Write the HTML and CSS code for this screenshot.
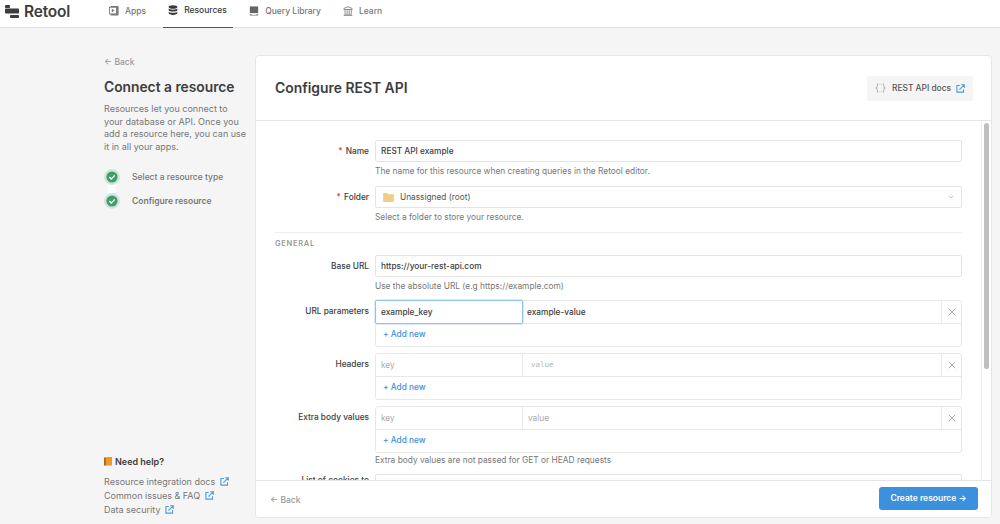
FILE: index.html
```html
<!DOCTYPE html>
<html lang="en">
<head>
<meta charset="utf-8">
<title>Retool - Configure REST API</title>
<link rel="stylesheet" href="styles.css">
</head>
<body>
<svg class="defs" width="0" height="0" aria-hidden="true">
  <symbol id="ext" viewBox="0 0 10 10">
    <path d="M4.2 1.6H1v7.4h7.4V5.8" fill="none" stroke="currentColor" stroke-width="1.2"/>
    <path d="M3.8 6.2L8.8 1.2M5.8 .8h3.4v3.4" fill="none" stroke="currentColor" stroke-width="1.2"/>
  </symbol>
  <symbol id="check" viewBox="0 0 16 16">
    <circle cx="8" cy="8" r="7.9" fill="#cfe6d9"/>
    <circle cx="8" cy="8" r="5.6" fill="#3f9f6c"/>
    <path d="M5.3 8.1l1.9 1.9 3.5-3.6" fill="none" stroke="#fff" stroke-width="1.4"/>
  </symbol>
  <symbol id="close" viewBox="0 0 8 8">
    <path d="M.8 .8l6.4 6.4M7.2 .8L.8 7.2" fill="none" stroke="currentColor" stroke-width="1"/>
  </symbol>
</svg>
<header class="topbar">
  <div class="logo">
    <svg class="logo-mark" viewBox="0 0 14 13" aria-hidden="true">
      <rect x="0" y="0" width="5" height="3" rx=".8" fill="#3d3d3d"/>
      <rect x="0" y="3.6" width="14" height="5" rx=".8" fill="#3d3d3d"/>
      <rect x="5" y="10" width="9" height="3" rx=".8" fill="#3d3d3d"/>
    </svg>
    <span class="logo-text">Retool</span>
  </div>
  <nav class="nav">
    <a class="nav-item nav-first">
      <svg class="nav-icon" viewBox="0 0 12 12" aria-hidden="true"><path d="M2 0h8.500a1 1 0 0 1 1 1v9.500a1 1 0 0 1-1 1H2z" fill="#777"/><rect x=".5" y="1.500" width="8.500" height="8" fill="#fff" stroke="#777"/><path d="M3.300 3.300l3.400 2.200-3.400 2.200z" fill="#777"/></svg>
      Apps
    </a>
    <a class="nav-item nav-active">
      <svg class="nav-icon" viewBox="0 0 12 12" aria-hidden="true"><ellipse cx="6" cy="2.400" rx="5.200" ry="2.200" fill="#3a3a3a"/><path d="M.8 4.200c1 1.800 9.400 1.800 10.400 0v2.300c-1 1.800-9.400 1.800-10.400 0z" fill="#3a3a3a"/><path d="M.8 8c1 1.800 9.400 1.800 10.400 0v1.600c0 1.300-2.300 2.300-5.200 2.300S.8 10.900.8 9.600z" fill="#3a3a3a"/></svg>
      Resources
    </a>
    <a class="nav-item nav-gap">
      <svg class="nav-icon" viewBox="0 0 12 12" aria-hidden="true"><path d="M1 .5h10v8H1z" fill="#666"/><path d="M1 9.500h10V11.500H1z" fill="#888"/><rect x="3" y="9.800" width="6" height="1" fill="#fff"/></svg>
      Query Library
    </a>
    <a class="nav-item nav-gap">
      <svg class="nav-icon" viewBox="0 0 12 12" aria-hidden="true"><path d="M6 .8L1 3v1.200h10V3zM2.500 5v4M5 5v4M7.500 5v4M10 5v4M1.500 9.800h9M.8 11.300h10.400" fill="none" stroke="#777"/></svg>
      Learn
    </a>
  </nav>
</header>

<main class="page">
  <aside class="side">
    <a class="side-back"><span class="arrow">←</span> Back</a>
    <h1 class="side-title">Connect a resource</h1>
    <p class="side-text">Resources let you connect to your database or API. Once you add a resource here, you can use it in all your apps.</p>
    <ol class="steps">
      <li class="step"><svg class="step-icon"><use href="#check"/></svg>Select a resource type</li>
      <li class="step-link"></li>
      <li class="step step-current"><svg class="step-icon"><use href="#check"/></svg>Configure resource</li>
    </ol>
    <div class="help">
      <div class="help-title">
        <svg class="book" viewBox="0 0 8 9" aria-hidden="true"><rect x="0" y=".5" width="2.500" height="8" fill="#a8681f"/><rect x="1.800" y="0" width="6.200" height="8.500" fill="#ec9a2a"/></svg>
        Need help?
      </div>
      <a class="help-link">Resource integration docs <svg class="ext"><use href="#ext"/></svg></a>
      <a class="help-link">Common issues &amp; FAQ <svg class="ext"><use href="#ext"/></svg></a>
      <a class="help-link">Data security <svg class="ext"><use href="#ext"/></svg></a>
    </div>
  </aside>

  <section class="card">
    <div class="card-head">
      <h2 class="card-title">Configure REST API</h2>
      <a class="docs-btn">
        <svg class="braces" viewBox="0 0 12 10" aria-hidden="true"><path d="M3.500 .5H2.500v3.500L.7 5l1.800 1v3.500h1M8.500 .5h1v3.500L11.300 5 9.500 6v3.500h-1M5 1h.8M6.800 1h.8M5 9h.8M6.800 9h.8" fill="none" stroke="#aaa" stroke-width=".9"/></svg>
        REST API docs
        <svg class="ext"><use href="#ext"/></svg>
      </a>
    </div>
    <div class="card-mid">
      <div class="scroll">
        <div class="row">
          <label class="label"><span class="req">*</span> Name</label>
          <div class="field"><div class="input">REST API example</div><p class="hint">The name for this resource when creating queries in the Retool editor.</p></div>
        </div>
        <div class="row">
          <label class="label"><span class="req">*</span> Folder</label>
          <div class="field">
            <div class="input input-select">
              <svg class="folder" viewBox="0 0 12 10" aria-hidden="true"><path d="M0 1a1 1 0 0 1 1-1h3.500l1 1.400H11a1 1 0 0 1 1 1V9a1 1 0 0 1-1 1H1a1 1 0 0 1-1-1z" fill="#f0cd87"/></svg>
              <span class="select-text">Unassigned (root)</span>
              <svg class="chev" viewBox="0 0 8 5" aria-hidden="true"><path d="M1 1l3 3 3-3" fill="none" stroke="#aaa"/></svg>
            </div>
            <p class="hint">Select a folder to store your resource.</p>
          </div>
        </div>
        <hr class="divider">
        <div class="section">GENERAL</div>
        <div class="row row-base">
          <label class="label">Base URL</label>
          <div class="field"><div class="input">https://your-rest-api.com</div><p class="hint">Use the absolute URL (e.g https://example.com)</p></div>
        </div>
        <div class="row row-kv">
          <label class="label label-low">URL parameters</label>
          <div class="field">
            <div class="kv">
              <div class="kv-line">
                <div class="kv-key kv-focus">example_key</div>
                <div class="kv-val">example-value</div>
                <div class="kv-x"><svg class="x"><use href="#close"/></svg></div>
              </div>
              <div class="kv-add">+ Add new</div>
            </div>
          </div>
        </div>
        <div class="row row-kv">
          <label class="label">Headers</label>
          <div class="field">
            <div class="kv">
              <div class="kv-line">
                <div class="kv-key ph">key</div>
                <div class="kv-val ph mono">value</div>
                <div class="kv-x"><svg class="x"><use href="#close"/></svg></div>
              </div>
              <div class="kv-add">+ Add new</div>
            </div>
          </div>
        </div>
        <div class="row row-kv row-extra">
          <label class="label">Extra body values</label>
          <div class="field">
            <div class="kv">
              <div class="kv-line">
                <div class="kv-key ph">key</div>
                <div class="kv-val ph">value</div>
                <div class="kv-x"><svg class="x"><use href="#close"/></svg></div>
              </div>
              <div class="kv-add">+ Add new</div>
            </div>
            <p class="hint">Extra body values are not passed for GET or HEAD requests</p>
          </div>
        </div>
        <div class="row">
          <label class="label label-top">List of cookies to</label>
          <div class="field"><div class="input"></div></div>
        </div>
      </div>
      <div class="scrollbar"><div class="thumb"></div></div>
    </div>
    <div class="card-foot">
      <a class="foot-back"><span class="arrow">←</span> Back</a>
      <a class="create">Create resource →</a>
    </div>
  </section>
</main>
</body>
</html>
```

FILE: styles.css
```css
* { box-sizing: border-box; }
html, body { margin: 0; height: 524px; overflow: hidden; }
body {
  font-family: Inter, "Liberation Sans", sans-serif;
  font-size: 9px;
  color: #3d3d3d;
  background: #f5f5f5;
  display: flex;
  flex-direction: column;
}
.defs { position: absolute; }
p, h1, h2, ol { margin: 0; padding: 0; }

.topbar {
  height: 28px;
  flex: none;
  background: #fff;
  border-bottom: 1px solid #e2e2e2;
  display: flex;
}
.logo { width: 100px; display: flex; align-items: center; padding: 0 0 5px 5px; gap: 5px; }
.logo-mark { width: 14px; height: 13px; }
.logo-text { font-size: 15.500px; font-weight: 600; color: #3d3d3d; letter-spacing: -.2px; }
.nav { display: flex; padding-left: 3px; }
.nav-item {
  display: flex; align-items: center; gap: 6px;
  height: 27px; padding: 0 6px 6px 6px;
  font-size: 8.500px; font-weight: 500; color: #777;
  margin-right: 6px;
}
.nav-first { margin-right: 11px; }
.nav-active { color: #3a3a3a; border-bottom: 1px solid #555; height: 28px; padding: 0 5px 7px; width: 70px; margin-right: 10px; }
.nav-gap { margin-right: 10px; }
.nav-icon { width: 10px; height: 10px; flex: none; }

.page { flex: 1; display: flex; min-height: 0; padding: 27px 8px 6px 104px; }

.side { width: 151px; flex: none; display: flex; flex-direction: column; padding-top: 1px; }
.side-back { font-size: 8.500px; color: #999; font-weight: 500; height: 13px; line-height: 13px; }
.arrow { color: #999; }
.side-title { font-size: 13.800px; font-weight: 600; color: #3d3d3d; line-height: 20px; margin-top: 8px; white-space: nowrap; }
.side-text { font-size: 9px; line-height: 12.500px; color: #777; margin-top: 6px; width: 144px; }
.steps { list-style: none; margin-top: 16px; }
.step { display: flex; align-items: center; gap: 12px; height: 16px; font-size: 8.500px; font-weight: 500; color: #777; }
.step-current { font-weight: 600; }
.step-icon { width: 16px; height: 16px; flex: none; }
.step-link { width: 8px; height: 7.500px; margin-left: 4px; background: #fff; }
.help { margin-top: auto; padding-bottom: 2px; }
.help-title { font-size: 9px; font-weight: 600; color: #3d3d3d; display: flex; align-items: center; gap: 3px; height: 14px; margin-bottom: 6px; }
.book { width: 8px; height: 9px; }
.help-link { display: flex; align-items: center; gap: 5px; font-size: 9px; color: #777; height: 14px; white-space: nowrap; }
.ext { width: 9px; height: 9px; color: #4a9be0; flex: none; }

.card {
  flex: 1; min-width: 0;
  background: #fff;
  border: 1px solid #e6e6e6;
  border-radius: 4px;
  display: flex; flex-direction: column;
  overflow: hidden;
}
.card-head {
  height: 65px; flex: none;
  display: flex; align-items: center; justify-content: space-between;
  padding: 0 18px 0 19px;
  border-bottom: 1px solid #e6e6e6;
}
.card-title { font-size: 13.900px; font-weight: 600; color: #3d3d3d; }
.docs-btn {
  display: flex; align-items: center; gap: 5px;
  height: 25px; padding: 0 8px;
  background: #f5f5f5; border-radius: 3px;
  font-size: 8.400px; font-weight: 500; color: #555;
}
.braces { width: 11px; height: 10px; margin-right: 1px; }

.card-mid { flex: 1; min-height: 0; display: flex; }
.scroll { flex: 1; min-width: 0; overflow: hidden; padding: 19px 19px 0 19px; }
.scrollbar { width: 10px; flex: none; border-left: 1px solid #eee; background: #fff; padding: 2px 2px 0 2px; }
.thumb { width: 5px; height: 246px; border-radius: 3px; background: #bfbfbf; }

.row { display: grid; grid-template-columns: 94px 1fr; column-gap: 6px; margin-bottom: 8px; }
.row-base { margin-bottom: 7px; }
.label { font-size: 8.300px; font-weight: 500; color: #3d3d3d; text-align: right; line-height: 22px; white-space: nowrap; }
.label-top { line-height: 12px; }
.label-low { line-height: 23px; }
.req { color: #e2403d; margin-right: 1px; }
.field { min-width: 0; }
.input {
  height: 22px; line-height: 20px;
  border: 1px solid #e4e4e4; border-radius: 2px;
  padding: 0 5px; font-size: 8.300px; font-weight: 500; color: #3d3d3d;
  background: #fff;
}
.input-select { display: flex; align-items: center; gap: 6px; }
.folder { width: 11px; height: 9px; margin-left: 2px; flex: none; }
.select-text { flex: 1; color: #555; font-weight: 400; }
.chev { width: 6px; height: 4px; margin-right: 2px; }
.hint { font-size: 8.350px; color: #777; line-height: 14px; margin-top: 2px; white-space: nowrap; }
.divider { border: 0; border-top: 1px solid #eee; margin: 8px 0 0; }
.section { font-size: 7.500px; font-weight: 600; letter-spacing: .7px; color: #999; line-height: 10px; margin: 6px 0 6px; }

.row-kv { margin-bottom: 6px; }
.row-extra { margin-bottom: 7px; }
.kv { border: 1px solid #e8e8e8; border-radius: 3px; background: #fff; }
.kv-line { display: flex; height: 23px; border-bottom: 1px solid #e8e8e8; }
.kv-key {
  width: 146px; flex: none; padding: 0 5px; line-height: 22px;
  font-size: 8.300px; font-weight: 500; color: #3d3d3d;
}
.kv-focus { border: 1px solid #8cc4f2; box-shadow: 0 0 0 1px #dcecfb; border-radius: 2px; line-height: 22px; margin: -1px 0 0 -1px; width: 148px; height: 24px; background: #fff; }
.kv-val { flex: 1; padding: 0 5px; line-height: 22px; font-size: 8.300px; font-weight: 500; color: #3d3d3d; border-left: 1px solid #e8e8e8; }
.kv-focus + .kv-val { border-left: 0; padding-left: 4px; }
.kv-x { width: 20px; flex: none; padding-left: 1px; border-left: 1px solid #e8e8e8; display: flex; align-items: center; justify-content: center; color: #aaa; }
.x { width: 8px; height: 8px; }
.ph { color: #aaa; font-weight: 400; }
.mono { font-family: "DejaVu Sans Mono", "Liberation Mono", monospace; font-size: 7.500px; padding-left: 8px; color: #b5b5b5; }
.kv-add { height: 22px; line-height: 21px; padding-left: 7px; font-size: 8.300px; font-weight: 500; color: #3f8fdc; }
.row-kv .hint { margin-top: 0; }

.card-foot {
  height: 37px; flex: none;
  border-top: 1px solid #e6e6e6;
  display: flex; align-items: center; justify-content: space-between;
  padding: 0 13px 2px 14px;
  background: #fff;
}
.foot-back { font-size: 8.500px; font-weight: 500; color: #999; padding-top: 4px; }
.create {
  width: 99px; height: 23px; line-height: 23px; text-align: center;
  background: #3b91de; color: #fff; border-radius: 3px;
  font-size: 8.500px; font-weight: 600;
}
```
